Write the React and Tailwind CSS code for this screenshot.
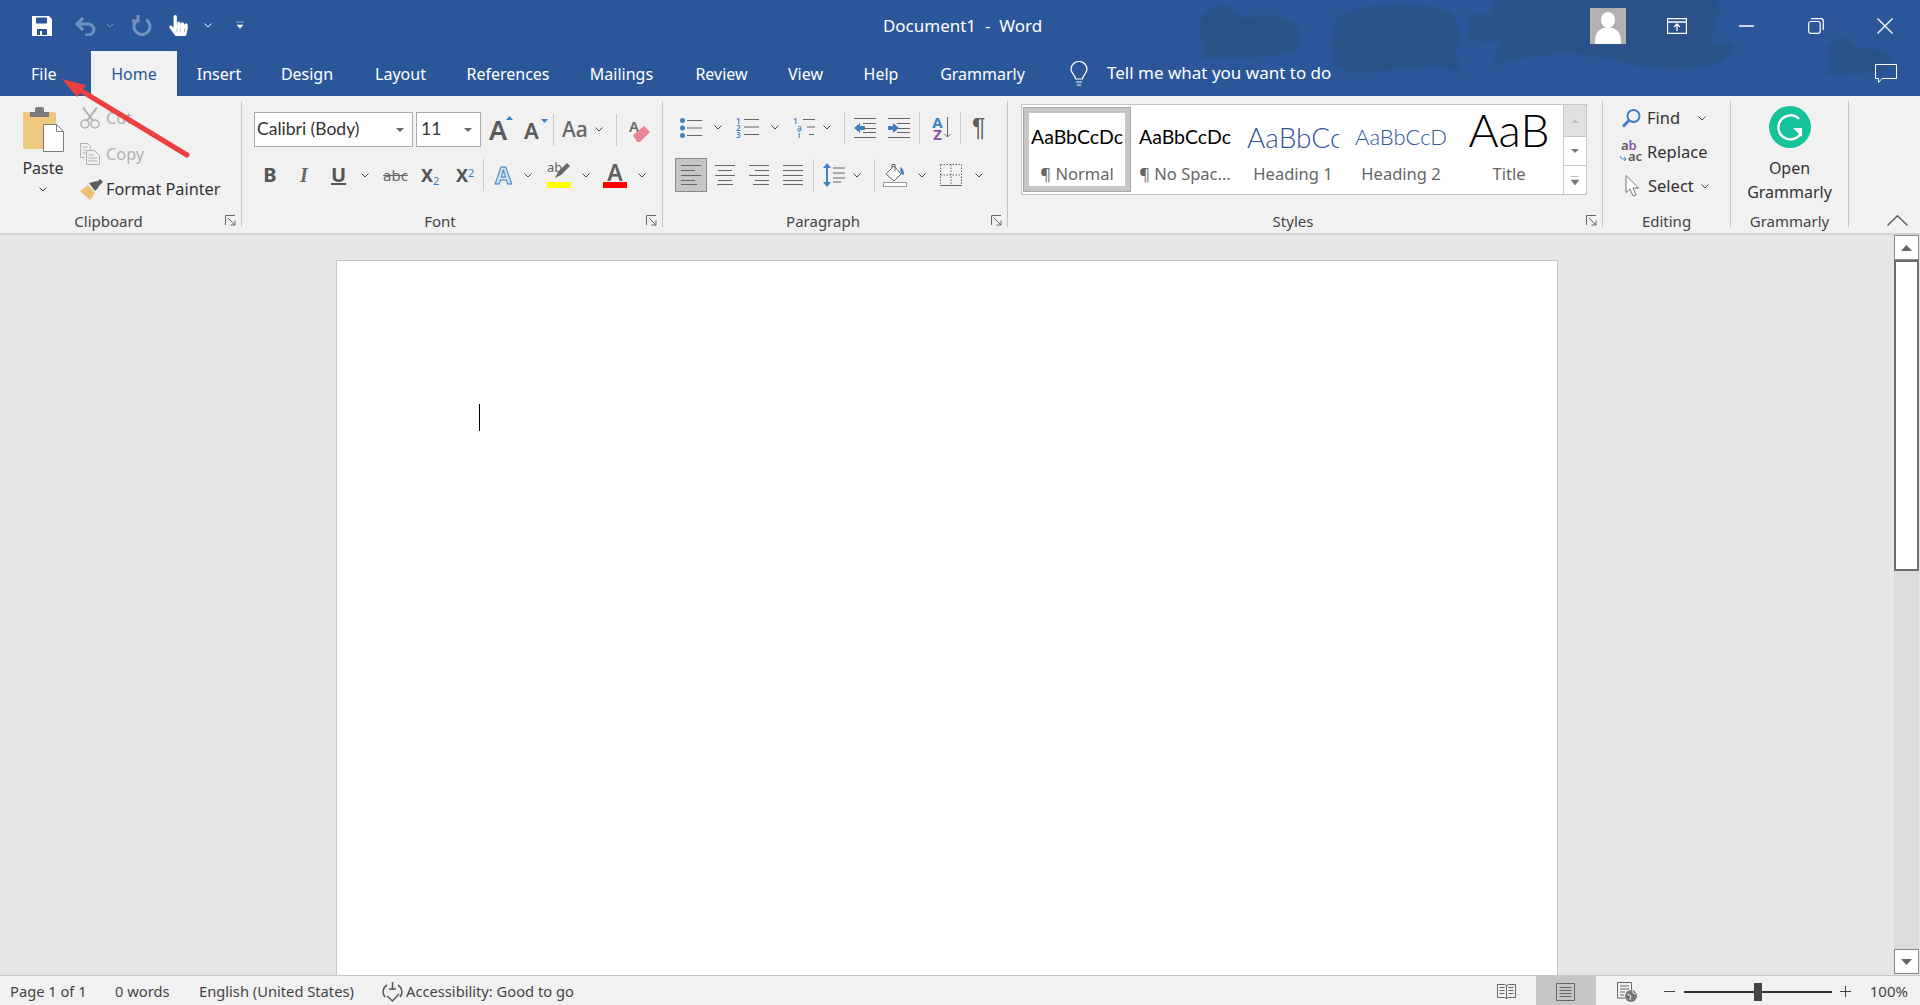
import { FaHandPointer } from "react-icons/fa";

const Chev = ({ className = "", color = "#444" }) => (
  <svg width="8" height="5" viewBox="0 0 8 5" className={"shrink-0 " + className}>
    <path d="M.5.5 4 4 7.5.5" fill="none" stroke={color} />
  </svg>
);

const Sep = () => <div className="w-px h-[126px] mt-[5px] bg-[#c6c6c6] shrink-0" />;
const MiniSep = ({ className = "" }) => <div className={"w-px h-[32px] bg-[#c8c8c8] shrink-0 " + className} />;

const Launcher = () => (
  <svg width="11" height="11" viewBox="0 0 11 11" className="absolute right-[5px] top-[6px]">
    <path d="M.5 10V.5H10M3 3l7 7M10 5.5V10H5.5" fill="none" stroke="#666" />
  </svg>
);

const Label = ({ children, launcher = true, className = "pr-[24px]" }) => (
  <div className={"relative mt-auto h-[24px] text-center text-[15px] leading-[24px] text-[#444] " + className}>
    {children}
    {launcher && <Launcher />}
  </div>
);

// horizontal lines for list and alignment icons
const Lines = ({ w, rows, stroke = "#666" }) => (
  <svg width={w} height="22" viewBox={`0 0 ${w} 22`} className="shrink-0">
    {rows.map((r, i) => (
      <path key={i} d={`M${r[0]} ${r[2]}.5H${r[1]}`} stroke={stroke} />
    ))}
  </svg>
);

const tabs = [
  ["Home", "w-[86px]"],
  ["Insert", "w-[84px]"],
  ["Design", "w-[92px]"],
  ["Layout", "w-[95px]"],
  ["References", "w-[120px]"],
  ["Mailings", "w-[107px]"],
  ["Review", "w-[93px]"],
  ["View", "w-[75px]"],
  ["Help", "w-[76px]"],
  ["Grammarly", "w-[127px]"],
];

const TitleBar = () => (
  <div className="flex h-[51px] items-center relative">
    <div className="flex-1 flex items-center pl-[32px]">
      <svg width="20" height="20" viewBox="0 0 20 20">
        <path
          fillRule="evenodd"
          fill="#fff"
          d="M0 0h17l3 3v17H0zM4 1.500v6h11v-6zM5 13v6h3v-4h2v4h5v-6z"
        />
      </svg>
      <svg width="22" height="20" viewBox="0 0 22 20" className="ml-[22px]">
        <path d="M9 2 3 8l6 6M3 8h11a6 5.500 0 0 1 0 11h-3" fill="none" stroke="#7391c0" strokeWidth="3" />
      </svg>
      <Chev color="#7391c0" className="ml-[10px]" />
      <svg width="20" height="21" viewBox="0 0 20 21" className="ml-[18px]">
        <path d="M14 4.500a8 8 0 1 1-8 0M6 0v6H0" fill="none" stroke="#7391c0" strokeWidth="3" />
      </svg>
      <FaHandPointer className="text-white text-[21px] ml-[16px]" />
      <Chev color="#fff" className="ml-[15px]" />
      <svg width="8" height="9" viewBox="0 0 8 9" className="ml-[24px]">
        <path d="M0 1h8M1 4h6L4 7.500z" fill="#fff" stroke="#fff" strokeWidth=".5" />
      </svg>
    </div>
    <div className="text-white text-[17px] whitespace-pre">Document1  -  Word</div>
    <div className="flex-1 flex items-center justify-end pr-[27px]">
      <div className="w-[36px] h-[36px] bg-[#b1b1b1] overflow-hidden flex justify-center">
        <svg width="36" height="36" viewBox="0 0 36 36">
          <ellipse cx="18" cy="12" rx="7" ry="8" fill="#fff" />
          <path d="M5 36c0-10 2-14 9-16h8c7 2 9 6 9 16z" fill="#fff" />
        </svg>
      </div>
      <svg width="20" height="16" viewBox="0 0 20 16" className="ml-[41px]">
        <path d="M.5.5h19v15H.500zM1 4h18M10 13V6.500M7 9l3-3 3 3" fill="none" stroke="#fff" strokeWidth="1.300" />
      </svg>
      <svg width="15" height="2" viewBox="0 0 15 2" className="ml-[52px]">
        <path d="M0 1h15" stroke="#fff" strokeWidth="1.500" />
      </svg>
      <svg width="16" height="16" viewBox="0 0 16 16" className="ml-[54px]">
        <path d="M3 .7h10a2.300 2.300 0 0 1 2.300 2.300v9" fill="none" stroke="#fff" strokeWidth="1.200" />
        <rect x=".7" y="3.500" width="11.500" height="11.800" rx="2" fill="none" stroke="#fff" strokeWidth="1.200" />
      </svg>
      <svg width="16" height="16" viewBox="0 0 16 16" className="ml-[53px]">
        <path d="M.5.5l15 15M15.500.5l-15 15" stroke="#fff" strokeWidth="1.300" />
      </svg>
    </div>
  </div>
);

const TabRow = () => (
  <div className="flex h-[45px] relative items-center">
    <div className="w-[91px] pl-[31px] text-white text-[16px]">File</div>
    {tabs.map(([name, w]) => (
      <div
        key={name}
        className={
          "h-full flex items-center justify-center text-[16px] " +
          w +
          (name === "Home" ? " bg-[#f1f1f1] text-[#2b579a]" : " text-white")
        }
      >
        {name}
      </div>
    ))}
    <svg width="18" height="25" viewBox="0 0 18 25" className="ml-[24px]">
      <path
        d="M5.500 18c0-4-4.500-5.500-4.500-10a8 7.500 0 0 1 16 0c0 4.500-4.500 6-4.500 10zM6 21h6M7 24h4"
        fill="none"
        stroke="#fff"
        strokeWidth="1.200"
      />
    </svg>
    <div className="ml-[19px] -mt-[2px] text-white text-[17px]">Tell me what you want to do</div>
    <svg width="22" height="20" viewBox="0 0 22 20" className="ml-auto mr-[23px]">
      <path d="M.5.5h21v14H7l-3.500 4v-4H.500z" fill="none" stroke="#fff" />
    </svg>
  </div>
);

const Clipboard = () => (
  <div className="w-[241px] flex flex-col pt-[8px] shrink-0">
    <div className="flex">
      <div className="w-[76px] pl-[10px] flex flex-col items-center">
        <svg width="41" height="45" viewBox="0 0 41 45" className="mt-[3px]">
          <rect x="0" y="5" width="33" height="37" rx="2" fill="#edc87e" />
          <path d="M7 5h5V2a2 2 0 0 1 2-2h5a2 2 0 0 1 2 2v3h5v5H7z" fill="#7c7c7c" />
          <path d="M20.500 17.500h13l7 7v20h-20z" fill="#fff" stroke="#7c7c7c" />
          <path d="M33.500 17.500v7h7" fill="none" stroke="#7c7c7c" />
        </svg>
        <div className="mt-[5px] text-[16px] leading-[22px] text-[#333]">Paste</div>
        <Chev className="mt-[8px]" />
      </div>
      <div className="pl-[4px] text-[16.3px]">
        <div className="flex items-center h-[28px]">
          <div className="w-[26px]">
            <svg width="20" height="22" viewBox="0 0 20 22">
              <path d="M3 .500 13 14M17 .500 7 14" stroke="#b1b1b1" strokeWidth="2" fill="none" />
              <circle cx="5" cy="17" r="4" fill="none" stroke="#b1b1b1" strokeWidth="1.500" />
              <circle cx="15" cy="17" r="4" fill="none" stroke="#b1b1b1" strokeWidth="1.500" />
            </svg>
          </div>
          <span className="text-[#b1b1b1]">Cut</span>
        </div>
        <div className="flex items-center h-[28px] mt-[8px]">
          <div className="w-[26px]">
            <svg width="20" height="22" viewBox="0 0 20 22">
              <path
                d="M.5.5h7l3 3v3M.5.5v14h4M6.500 7.500h8l5 5v9h-13zM8.500 12h5M8.500 15h9M8.500 18h9M2.500 4h5M2.500 7h3M2.500 10h3"
                fill="none"
                stroke="#b1b1b1"
              />
            </svg>
          </div>
          <span className="text-[#b1b1b1]">Copy</span>
        </div>
        <div className="flex items-center h-[28px] mt-[7px]">
          <div className="w-[26px]">
            <svg width="23" height="21" viewBox="0 0 23 21">
              <path d="M0 12 8 6l7 8-5 7z" fill="#ecc176" />
              <path d="M9 4l8-2 2 4-1 3-3 3z" fill="#5f5f5f" />
              <path d="M15 5l5-5 3 3-5 5z" fill="#5f5f5f" />
            </svg>
          </div>
          <span className="text-[#333]">Format Painter</span>
        </div>
      </div>
    </div>
    <Label>Clipboard</Label>
  </div>
);

const ComboBox = ({ text, className }) => (
  <div
    className={
      "h-[35px] bg-white border border-[#ababab] flex items-center justify-between pl-[2px] pr-[8px] font-['Lato',sans-serif] text-[17.5px] text-[#333] " +
      className
    }
  >
    {text}
    <svg width="8" height="4" viewBox="0 0 8 4">
      <path d="M0 0h8L4 4z" fill="#666" />
    </svg>
  </div>
);

const FontGroup = () => (
  <div className="w-[420px] flex flex-col pt-[8px] shrink-0">
    <div className="h-[47px] flex items-center pl-[12px] pt-[4px]">
      <ComboBox text="Calibri (Body)" className="w-[159px]" />
      <ComboBox text="11" className="w-[65px] ml-[3px] pl-[4px]" />
      <div className="relative ml-[8px] w-[24px] text-[27px] leading-none font-semibold text-[#5a5a5a]">
        A
        <svg width="7" height="4" viewBox="0 0 7 4" className="absolute right-0 top-0">
          <path d="M0 4h7L3.500 0z" fill="#3f7fc4" />
        </svg>
      </div>
      <div className="relative ml-[11px] w-[24px] text-[22px] leading-none font-semibold text-[#5a5a5a]">
        A
        <svg width="7" height="4" viewBox="0 0 7 4" className="absolute right-0 top-0">
          <path d="M0 0h7L3.500 4z" fill="#3f7fc4" />
        </svg>
      </div>
      <MiniSep className="ml-[5px]" />
      <div className="ml-[8px] w-[26px] text-[21px] leading-none font-medium text-[#666]">Aa</div>
      <Chev className="ml-[7px]" />
      <MiniSep className="ml-[13px]" />
      <div className="relative ml-[12px] w-[22px] h-[26px]">
        <span className="absolute left-0 -top-[2px] text-[15px] font-semibold text-[#666]">A</span>
        <svg width="22" height="26" viewBox="0 0 22 26" className="absolute inset-0">
          <path d="M4 18 15 9l6 6-10 10H8z" fill="#e98597" />
        </svg>
      </div>
    </div>
    <div className="h-[48px] flex items-center pl-[21px] text-[#555]">
      <div className="w-[14px] text-center text-[20px] font-bold leading-none">B</div>
      <div className="ml-[20px] w-[14px] text-center text-[20px] font-bold italic leading-none font-['Liberation_Serif',serif] text-[#666]">I</div>
      <div className="ml-[20px] w-[14px] text-center text-[20px] font-bold underline leading-none">U</div>
      <Chev className="ml-[16px]" />
      <div className="ml-[14px] w-[25px] text-[15px] line-through leading-none text-[#666]">abc</div>
      <div className="ml-[13px] w-[22px] text-[18px] font-bold leading-none">
        X<sub className="text-[11px] font-normal text-[#3f7fc4]">2</sub>
      </div>
      <div className="ml-[13px] w-[22px] text-[18px] font-bold leading-none">
        X<sup className="text-[11px] font-normal text-[#3f7fc4]">2</sup>
      </div>
      <MiniSep className="ml-[5px]" />
      <div className="ml-[11px] w-[19px] text-[24px] font-bold leading-none text-[#d9e8f7] [-webkit-text-stroke:1px_#3f7fc4]">A</div>
      <Chev className="ml-[10px]" />
      <div className="ml-[15px] w-[24px] h-[26px] flex flex-col justify-end relative">
        <span className="absolute left-0 -top-[1px] text-[13px] leading-none text-[#666]">ab</span>
        <svg width="16" height="16" viewBox="0 0 16 16" className="absolute right-0 top-0">
          <path d="M0 16l3-6L12 1l3 3-9 9z" fill="#666" />
        </svg>
        <div className="h-[6px] bg-[#ffff00]" />
      </div>
      <Chev className="ml-[11px]" />
      <div className="ml-[13px] w-[24px] flex flex-col items-center">
        <span className="text-[23px] leading-[20px] font-semibold text-[#5f5f5f]">A</span>
        <div className="h-[6px] w-full bg-[#ff0000]" />
      </div>
      <Chev className="ml-[11px]" />
    </div>
    <Label>Font</Label>
  </div>
);

const ParagraphGroup = () => (
  <div className="w-[344px] flex flex-col pt-[8px] shrink-0">
    <div className="h-[47px] flex items-center pl-[17px]">
      <svg width="22" height="20" viewBox="0 0 22 20">
        <circle cx="2.500" cy="2.500" r="2.500" fill="#3f7fc4" />
        <circle cx="2.500" cy="10" r="2.500" fill="#3f7fc4" />
        <circle cx="2.500" cy="17.500" r="2.500" fill="#3f7fc4" />
        <path d="M7 2.500h15M7 10h15M7 17.500h15" stroke="#666" />
      </svg>
      <Chev className="ml-[12px]" />
      <div className="ml-[14px] flex">
        <div className="w-[7px] text-[8px] leading-[7px] text-[#3f7fc4] font-semibold">
          1<br />2<br />3
        </div>
        <svg width="15" height="20" viewBox="0 0 15 20" className="ml-[1px]">
          <path d="M0 2.500h15M0 10h15M0 17.500h15" stroke="#666" />
        </svg>
      </div>
      <Chev className="ml-[12px]" />
      <div className="ml-[14px] flex">
        <div className="w-[9px] text-[8px] leading-[7px] text-[#3f7fc4] font-semibold">
          1<br /><span className="pl-[4px]">a</span><br /><span className="pl-[5px]">i</span>
        </div>
        <svg width="13" height="20" viewBox="0 0 13 20">
          <path d="M1 2.500h12M5 10h8M7 17.500h5" stroke="#666" />
        </svg>
      </div>
      <Chev className="ml-[8px]" />
      <MiniSep className="ml-[13px]" />
      <svg width="22" height="22" viewBox="0 0 22 22" className="ml-[9px]">
        <path d="M0 1.500h22M9 6.500h13M9 11.500h13M9 15.500h13M0 20.500h22" stroke="#666" />
        <path d="M0 11l6-5v3h5v4H6v3z" fill="#3f7fc4" />
      </svg>
      <svg width="22" height="22" viewBox="0 0 22 22" className="ml-[12px]">
        <path d="M0 1.500h22M9 6.500h13M9 11.500h13M9 15.500h13M0 20.500h22" stroke="#666" />
        <path d="M11 11 5 6v3H0v4h5v3z" fill="#3f7fc4" />
      </svg>
      <MiniSep className="ml-[9px]" />
      <div className="ml-[12px] w-[11px] flex flex-col items-center text-[15px] font-bold leading-[12px]">
        <span className="text-[#3f7fc4]">A</span>
        <span className="text-[#8b53a8]">Z</span>
      </div>
      <svg width="7" height="21" viewBox="0 0 7 21" className="ml-[1px]">
        <path d="M3.500 0v20M.5 17l3 3 3-3" fill="none" stroke="#666" />
      </svg>
      <MiniSep className="ml-[9px]" />
      <div className="ml-[11px] text-[25px] leading-none text-[#5a5a5a] font-['Liberation_Sans',sans-serif]">¶</div>
    </div>
    <div className="h-[48px] flex items-center pl-[12px]">
      <div className="w-[32px] h-[34px] bg-[#c6c6c6] border border-[#8a8a8a] flex items-center justify-center">
        <Lines w={20} rows={[[0, 20, 1], [0, 14, 6], [0, 20, 11], [0, 14, 16], [0, 16, 20]]} />
      </div>
      <div className="ml-[8px]">
        <Lines w={20} rows={[[0, 20, 1], [3, 17, 6], [0, 20, 11], [3, 17, 16], [2, 18, 20]]} />
      </div>
      <div className="ml-[14px]">
        <Lines w={20} rows={[[0, 20, 1], [6, 20, 6], [0, 20, 11], [6, 20, 16], [4, 20, 20]]} />
      </div>
      <div className="ml-[14px]">
        <Lines w={20} rows={[[0, 20, 1], [0, 20, 6], [0, 20, 11], [0, 20, 16], [0, 20, 20]]} />
      </div>
      <MiniSep className="ml-[10px]" />
      <svg width="22" height="24" viewBox="0 0 22 24" className="ml-[9px]">
        <path d="M4 0 0 5h3v14H0l4 5 4-5H5V5h3z" fill="#3f7fc4" />
        <path d="M10 5h12M10 10h12M10 15h12M10 19h8" stroke="#666" />
      </svg>
      <Chev className="ml-[8px]" />
      <MiniSep className="ml-[13px]" />
      <svg width="24" height="24" viewBox="0 0 24 24" className="ml-[8px]">
        <path d="M3 11 11 3l7 8-7 7z" fill="#fff" stroke="#666" />
        <path d="M9 5V1.500h3V8" fill="none" stroke="#666" />
        <path d="M17 4c3 1 4 4 4 8l-3-1z" fill="#3f7fc4" />
        <rect x=".5" y="19.500" width="23" height="4" fill="#fff" stroke="#999" />
      </svg>
      <Chev className="ml-[11px]" />
      <svg width="22" height="22" viewBox="0 0 22 22" className="ml-[14px]">
        <path d="M.5.5h21v21M.5.5v21M11 .500v21M.5 11h21" fill="none" stroke="#666" strokeDasharray="1.500 1.500" />
        <path d="M0 21.500h22" stroke="#666" />
      </svg>
      <Chev className="ml-[13px]" />
    </div>
    <Label>Paragraph</Label>
  </div>
);

const styleItems = [
  { name: "¶ Normal", sample: "AaBbCcDc", cls: "text-[19.500px] leading-[48px] text-black", on: true },
  { name: "¶ No Spac...", sample: "AaBbCcDc", cls: "text-[19.500px] leading-[48px] text-black" },
  { name: "Heading 1", sample: "AaBbCcDc", cls: "text-[28px] leading-[48px] text-[#2f5496] font-light" },
  { name: "Heading 2", sample: "AaBbCcDd", cls: "text-[22px] leading-[48px] text-[#2f5496] font-light" },
  { name: "Title", sample: "AaB", cls: "text-[46px] leading-[34px] text-black font-light" },
];

const StylesGroup = () => (
  <div className="w-[594px] flex flex-col pt-[8px] shrink-0">
    <div className="ml-[13px] w-[566px] h-[91px] bg-white border border-[#c6c6c6] flex">
      <div className="w-[542px] flex pl-[1px] pt-[2px]">
        {styleItems.map((s) => (
          <div
            key={s.name}
            className={
              "w-[108px] h-[85px] border-[6px] flex flex-col items-center " +
              (s.on ? "border-[#c8c6c4] outline outline-[#a6a6a6] -outline-offset-[1px]" : "border-transparent")
            }
          >
            <div
              className={
                "w-[92px] h-[48px] overflow-hidden whitespace-nowrap text-center font-['Lato',sans-serif] " +
                s.cls
              }
            >
              {s.sample}
            </div>
            <div className="h-[25px] leading-[25px] text-[16.500px] text-[#666] whitespace-nowrap">{s.name}</div>
          </div>
        ))}
      </div>
      <div className="w-[23px] flex flex-col border-l border-[#c6c6c6]">
        <div className="h-[32px] bg-[#e0e0e0] flex items-center justify-center border-b border-[#c6c6c6]">
          <svg width="8" height="4" viewBox="0 0 8 4">
            <path d="M0 4h8L4 0z" fill="#c0c0c0" />
          </svg>
        </div>
        <div className="h-[29px] flex items-center justify-center border-b border-[#c6c6c6]">
          <svg width="8" height="4" viewBox="0 0 8 4">
            <path d="M0 0h8L4 4z" fill="#777" />
          </svg>
        </div>
        <div className="flex-1 flex items-center justify-center">
          <svg width="8" height="9" viewBox="0 0 8 9">
            <path d="M0 .5h8M0 4h8L4 9z" fill="#777" stroke="#777" strokeWidth=".5" />
          </svg>
        </div>
      </div>
    </div>
    <Label>Styles</Label>
  </div>
);

const EditingGroup = () => (
  <div className="w-[127px] flex flex-col pt-[8px] shrink-0 text-[16.500px] text-[#333]">
    <div className="flex items-center h-[28px] pl-[19px]">
      <svg width="19" height="19" viewBox="0 0 19 19">
        <circle cx="11.500" cy="7" r="6" fill="none" stroke="#3f7fc4" strokeWidth="2" />
        <path d="M7 11.500 1 17.500" stroke="#3f7fc4" strokeWidth="3" />
      </svg>
      <span className="ml-[6px]">Find</span>
      <Chev className="ml-[18px]" />
    </div>
    <div className="flex items-center h-[28px] mt-[6px] pl-[17px]">
      <div className="w-[27px] h-[24px] relative text-[13px] leading-[11px] font-semibold">
        <div className="pl-[1px]">
          <span className="text-[#5a5a5a]">a</span>
          <span className="text-[#8b53a8]">b</span>
        </div>
        <div className="pl-[8px] text-[#5a5a5a]">ac</div>
        <svg width="7" height="6" viewBox="0 0 7 6" className="absolute left-0 bottom-[2px]">
          <path d="M.5 0c0 3 2 3 5 3M4 1l2 2-2 2" fill="none" stroke="#3f7fc4" />
        </svg>
      </div>
      <span>Replace</span>
    </div>
    <div className="flex items-center h-[28px] mt-[6px] pl-[22px]">
      <svg width="15" height="22" viewBox="0 0 15 22">
        <path d="M1 .5v17l4-3.500 3 7 3-1-3-7h5.500z" fill="#fff" stroke="#777" />
      </svg>
      <span className="ml-[8px]">Select</span>
      <Chev className="ml-[7px]" />
    </div>
    <Label launcher={false} className="">Editing</Label>
  </div>
);

const GrammarlyGroup = () => (
  <div className="w-[117px] flex flex-col items-center pt-[8px] shrink-0 text-[16px] leading-[24px] text-[#333]">
    <svg width="42" height="42" viewBox="0 0 42 42" className="mt-[2px]">
      <circle cx="21" cy="21" r="21" fill="#15c39a" />
      <path d="M30 13a12 12 0 1 0 2 14" fill="none" stroke="#fff" strokeWidth="2.500" />
      <path d="M24 22h9v9z" fill="#fff" />
    </svg>
    <div className="mt-[8px]">Open</div>
    <div>Grammarly</div>
    <div className="mt-auto h-[24px] text-[15px] text-[#444]">Grammarly</div>
  </div>
);

const Ribbon = () => (
  <div className="flex h-[139px] bg-[#f1f1f1] border-b-2 border-[#d2d2d2]">
    <Clipboard />
    <Sep />
    <FontGroup />
    <Sep />
    <ParagraphGroup />
    <Sep />
    <StylesGroup />
    <Sep />
    <EditingGroup />
    <Sep />
    <GrammarlyGroup />
    <Sep />
    <div className="flex-1 flex flex-col justify-end pb-[7px] pl-[38px]">
      <svg width="21" height="11" viewBox="0 0 21 11">
        <path d="M.5 10.500 10.500.7l10 9.800" fill="none" stroke="#555" strokeWidth="1.300" />
      </svg>
    </div>
  </div>
);

const ScrollButton = ({ up }) => (
  <div className="h-[25px] bg-white border border-[#8a8a8a] flex items-center justify-center">
    <svg width="11" height="6" viewBox="0 0 11 6">
      <path d={up ? "M0 6h11L5.500 0z" : "M0 0h11L5.500 6z"} fill="#666" />
    </svg>
  </div>
);

const Scrollbar = () => (
  <div className="w-[26px] pr-px flex flex-col shrink-0 pb-px">
    <ScrollButton up />
    <div className="h-[311px] bg-white border-2 border-[#6d6d6d]" />
    <div className="flex-1 bg-[#dcdcdc]" />
    <ScrollButton />
  </div>
);

const StatusBar = () => (
  <div className="h-[30px] shrink-0 bg-[#f1f1f1] border-t border-[#c6c6c6] flex items-center pt-[2px] text-[14.700px] text-[#444]">
    <div className="w-[115px] pl-[10px]">Page 1 of 1</div>
    <div className="w-[84px]">0 words</div>
    <div className="w-[183px]">English (United States)</div>
    <svg width="21" height="22" viewBox="0 0 21 22">
      <path d="M5 4a8 8 0 0 0-2 12M16 4a8 8 0 0 1 2 12M10.500 1v8M7 8h7M5 15l5.500 5L17 13" fill="none" stroke="#555" strokeWidth="1.500" />
    </svg>
    <div className="ml-[3px]">Accessibility: Good to go</div>
    <div className="ml-auto h-full flex items-center pr-[12px]">
      <svg width="19" height="17" viewBox="0 0 19 17">
        <path d="M9.500 2v14M.5 1.500h7l2 1 2-1h7v13h-7l-2 1-2-1h-7zM2.500 4.500h5M2.500 7.500h5M2.500 10.500h5M11.500 4.500h5M11.500 7.500h5M11.500 10.500h5" fill="none" stroke="#666" />
      </svg>
      <div className="ml-[20px] w-[60px] -mt-[2px] h-[29px] bg-[#c6c6c6] flex items-center justify-center">
        <svg width="19" height="18" viewBox="0 0 19 18" className="mt-[2px]">
          <path d="M.5.5h18v17H.500zM3.500 4.500h12M3.500 7.500h12M3.500 10.500h12M3.500 13.500h12" fill="none" stroke="#666" />
        </svg>
      </div>
      <svg width="20" height="20" viewBox="0 0 20 20" className="ml-[21px]">
        <path d="M8 16H.5V.5h14v7M3 4h9M3 7h9M3 10h5M3 13h4" fill="none" stroke="#666" />
        <circle cx="14" cy="14" r="6" fill="#777" />
        <path d="M10 12l4 2-1 4M15 9l2 3 2-1" fill="none" stroke="#f1f1f1" />
      </svg>
      <div className="ml-[27px] w-[11px] h-px bg-[#444]" />
      <div className="ml-[9px] w-[148px] h-[2px] bg-[#333] relative">
        <div className="absolute left-[70px] -top-[8px] w-[8px] h-[18px] bg-[#444]" />
      </div>
      <svg width="11" height="11" viewBox="0 0 11 11" className="ml-[8px]">
        <path d="M0 5.500h11M5.500 0v11" stroke="#444" />
      </svg>
      <div className="ml-[19px] text-[15px]">100%</div>
    </div>
  </div>
);

const App = () => {
  return (
    <div className="relative h-screen w-full overflow-hidden flex flex-col bg-[#e6e6e6] font-['Noto_Sans',sans-serif]">
      <div className="relative bg-[#2b579a] shrink-0">
        {/* clouds behind the title bar */}
        <svg viewBox="0 0 1920 96" className="absolute inset-0 w-full h-full blur-[1px]">
          <g fill="#2b5189">
            <path d="M1199 58l6-10c-9-13-8-36 11-42 12-4 24 4 30 14 12-8 39-6 51 6 9 12 3 24-7 26-20 6-50 6-91 6z" />
            <path d="M1326 60l9-2c-7-13-5-38 10-46 25-10 80-10 100-2 17 8 17 30 10 45l8 19-23-7c-30-1-70 7-90 5z" />
            <path d="M1468 14h22l3-14h225c4 15-2 30-10 45 12-5 24-3 25 1-3 14-23 24-53 24-40 2-80-18-120-16-30 1-50 8-68 12l8-24-32-2z" />
            <path d="M1826 74l6-10c-8-9-6-24 8-26 10-1 16 6 18 12 12-4 32 0 34 10 0 8-7 12-22 12-15 2-30 4-44 2z" />
          </g>
        </svg>
        <TitleBar />
        <TabRow />
      </div>
      <Ribbon />
      <div className="flex-1 flex min-h-0">
        <div className="flex-1 flex justify-center pt-[25px]">
          <div className="w-[1222px] bg-white border border-[#c6c6c6] border-b-0 pt-[143px] pl-[142px]">
            <div className="w-px h-[27px] bg-black" />
          </div>
        </div>
        <Scrollbar />
      </div>
      <StatusBar />
      {/* red arrow added on top of the screenshot */}
      <svg width="200" height="170" viewBox="0 0 200 170" className="absolute left-0 top-0 pointer-events-none">
        <path d="M187 155 75 87" stroke="#ea4040" strokeWidth="5" strokeLinecap="round" />
        <path d="M62 79l24 6-9 12z" fill="#ea4040" />
      </svg>
    </div>
  );
};

export default App;
